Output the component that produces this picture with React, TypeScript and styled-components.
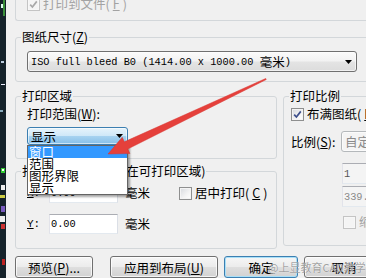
import React from "react";
import styled, { createGlobalStyle } from "styled-components";

const CJK = `"Noto Sans CJK SC", "Noto Sans", sans-serif`;
const MONO = `"Liberation Mono", "DejaVu Sans Mono", monospace`;
const LINE = "#d3d7da";

const Global = createGlobalStyle`
  html, body { margin: 0; padding: 0; background: #f0f0f0; }
  body { width: 366px; height: 278px; overflow: hidden; }
`;

const Frame = styled.div`
  position: relative;
  width: 366px;
  height: 278px;
  overflow: hidden;
  display: flex;
  background: #f0f0f0;
  font-family: ${CJK};
  font-size: 12.5px;
  color: #000;
`;

const Desktop = styled.svg`
  flex: 0 0 6px;
  width: 6px;
  height: 278px;
  display: block;
`;

const Dialog = styled.div`
  flex: 0 0 375px;
  margin-left: 9px;
  display: flex;
  flex-direction: column;
`;

const PrevGroup = styled.div`
  height: 22px;
  box-sizing: border-box;
  border-left: 1px solid ${LINE};
  border-bottom: 1px solid ${LINE};
  border-bottom-left-radius: 3px;
  padding-left: 11px;
  overflow: hidden;
`;

const Group = styled.fieldset<{ $mt?: number; $w?: number }>`
  margin: ${(p) => p.$mt ?? 0}px 0 0 0;
  padding: 0;
  border: 1px solid ${LINE};
  border-radius: 3px;
  min-width: 0;
  box-sizing: border-box;
  width: ${(p) => (p.$w ? `${p.$w}px` : "auto")};
`;

const Legend = styled.legend`
  margin-left: 5px;
  padding: 0 1px;
  height: 14px;
  line-height: 14px;
  font-size: 12.5px;
  white-space: nowrap;
`;

const Body = styled.div<{ $pad: string; $gap?: number }>`
  padding: ${(p) => p.$pad};
  display: flex;
  flex-direction: column;
  gap: ${(p) => p.$gap ?? 0}px;
`;

const Columns = styled.div`
  display: flex;
  align-items: flex-start;
  gap: 6px;
  margin-top: 7px;
`;

const Column = styled.div<{ $w: number }>`
  flex: 0 0 ${(p) => p.$w}px;
  display: flex;
  flex-direction: column;
`;

const Key = styled.span`
  text-decoration: underline;
`;

const Lat = styled.span`
  font-family: ${MONO};
  font-size: 10.3px;
  white-space: pre;
`;

const Label = styled.div<{ $w?: number; $mt?: number }>`
  height: 14px;
  line-height: 14px;
  white-space: nowrap;
  margin-top: ${(p) => p.$mt ?? 0}px;
  ${(p) => (p.$w ? `flex: 0 0 ${p.$w}px;` : "")}
`;

const MonoLabel = styled.div<{ $w: number }>`
  flex: 0 0 ${(p) => p.$w}px;
  font-family: ${MONO};
  font-size: 11px;
  line-height: 14px;
`;

const CheckRow = styled.div<{ $mt?: number; $ml?: number; $disabled?: boolean }>`
  display: flex;
  align-items: center;
  gap: 3px;
  height: 14px;
  line-height: 14px;
  white-space: nowrap;
  margin-top: ${(p) => p.$mt ?? 0}px;
  margin-left: ${(p) => p.$ml ?? 0}px;
  color: ${(p) => (p.$disabled ? "#a3a3a3" : "#000")};
`;

const Box = styled.span<{ $disabled?: boolean }>`
  flex: none;
  width: 13px;
  height: 13px;
  box-sizing: border-box;
  border: 1px solid ${(p) => (p.$disabled ? "#c4c4c4" : "#8e8f8f")};
  background: ${(p) =>
    p.$disabled
      ? "#f4f4f4"
      : "linear-gradient(135deg, #d6d9de 0%, #f4f4f4 60%, #ffffff 100%)"};
  box-shadow: inset 0 0 0 1px ${(p) => (p.$disabled ? "#f7f7f7" : "#f4f4f4")};
  display: flex;
  align-items: center;
  justify-content: center;
`;

const Row = styled.div<{ $mt?: number }>`
  display: flex;
  align-items: center;
  margin-top: ${(p) => p.$mt ?? 0}px;
`;

const Select = styled.div<{ $w: number; $h: number; $variant: "plain" | "hot" | "disabled" }>`
  position: relative;
  width: ${(p) => p.$w}px;
  height: ${(p) => p.$h}px;
  box-sizing: border-box;
  border-radius: 3px;
  display: flex;
  align-items: center;
  padding-left: 3px;
  white-space: nowrap;
  border: 1px solid
    ${(p) => (p.$variant === "hot" ? "#3c7fb1" : p.$variant === "disabled" ? "#b4b8bb" : "#707070")};
  background: ${(p) =>
    p.$variant === "hot"
      ? "linear-gradient(#e6f3fb 0%, #cfe8f8 48%, #a6d2f0 52%, #86bfe8 100%)"
      : p.$variant === "disabled"
      ? "#f4f4f4"
      : "linear-gradient(#fbfbfb 0%, #f2f2f2 48%, #e4e4e4 52%, #dcdcdc 100%)"};
  color: ${(p) => (p.$variant === "disabled" ? "#8a8a8a" : "#000")};
  box-shadow: inset 0 0 0 1px rgba(255, 255, 255, 0.6);
`;

const DropArrow = styled.svg`
  margin-left: auto;
  margin-right: 4px;
  width: 7px;
  height: 4px;
  flex: none;
`;

const SelectWrap = styled.div`
  position: relative;
  margin-top: 6px;
`;

const ListBox = styled.div`
  position: absolute;
  top: 100%;
  left: 0;
  z-index: 5;
  width: 101px;
  box-sizing: border-box;
  border: 1px solid #646464;
  background: #fff;
  box-shadow: 2px 2px 2px rgba(0, 0, 0, 0.35);
`;

const ListItem = styled.div<{ $selected?: boolean }>`
  height: 12px;
  line-height: 12px;
  padding-left: 1px;
  white-space: nowrap;
  background: ${(p) => (p.$selected ? "#3399ff" : "transparent")};
  color: ${(p) => (p.$selected ? "#fff" : "#000")};
`;

const TextBox = styled.div<{ $w: number; $h: number; $ml?: number; $mt?: number; $disabled?: boolean }>`
  width: ${(p) => p.$w}px;
  height: ${(p) => p.$h}px;
  margin-left: ${(p) => p.$ml ?? 0}px;
  margin-top: ${(p) => p.$mt ?? 0}px;
  box-sizing: border-box;
  border: 1px solid;
  border-color: #abadb3 #dbdfe6 #e3e9ef #e2e3ea;
  background: ${(p) => (p.$disabled ? "#f4f4f4" : "#fff")};
  color: ${(p) => (p.$disabled ? "#8a8a8a" : "#000")};
  font-family: ${MONO};
  font-size: 10.3px;
  padding-left: 1px;
  display: flex;
  align-items: center;
  flex: none;
`;

const Unit = styled.div<{ $ml: number }>`
  margin-left: ${(p) => p.$ml}px;
  line-height: 14px;
`;

const ButtonBar = styled.div`
  display: flex;
  gap: 6px;
  margin-top: 7px;
`;

const Button = styled.button<{ $w: number; $ml?: number; $default?: boolean }>`
  flex: 0 0 ${(p) => p.$w}px;
  height: 22px;
  margin: 0 0 0 ${(p) => p.$ml ?? 0}px;
  padding: 0;
  border: 1px solid ${(p) => (p.$default ? "#3c7fb1" : "#707070")};
  border-radius: 3px;
  background: linear-gradient(#f6f6f6 0%, #ececec 48%, #dedede 52%, #d2d2d2 100%);
  box-shadow: inset 0 0 0 1px ${(p) => (p.$default ? "#a9e0f8" : "rgba(255,255,255,0.75)")};
  font-family: ${CJK};
  font-size: 12.5px;
  color: #000;
  white-space: nowrap;
`;

const Overlay = styled.svg`
  position: absolute;
  left: 0;
  top: 0;
  width: 366px;
  height: 278px;
  z-index: 10;
  pointer-events: none;
`;

const Watermark = styled.div`
  position: absolute;
  left: 268px;
  top: 259px;
  z-index: 11;
  font-family: ${CJK};
  font-size: 11px;
  line-height: 16px;
  color: rgba(100, 100, 100, 0.6);
  text-shadow: 0 0 1px #fff;
  white-space: nowrap;
`;

const Check = ({ on, disabled }: { on?: boolean; disabled?: boolean }) => (
  <Box $disabled={disabled}>
    {on && (
      <svg width="9" height="9" viewBox="0 0 9 9">
        <path
          d="M1.2 4.6 L3.4 7 L7.8 1.4"
          fill="none"
          stroke={disabled ? "#a8a8a8" : "#3d4f8c"}
          strokeWidth="1.7"
        />
      </svg>
    )}
  </Box>
);

const Arrow = () => (
  <DropArrow viewBox="0 0 7 4">
    <path d="M0 0 H7 L3.5 4 Z" fill="#000" />
  </DropArrow>
);

export default function App() {
  return (
    <>
      <Global />
      <Frame>
        <Desktop viewBox="0 0 6 278">
          <rect width="6" height="278" fill="#15222a" />
          <rect x="3" y="0" width="2" height="16" fill="#3a8f3a" />
          <rect x="1" y="4" width="2" height="4" fill="#dfe" />
          <rect x="1" y="61" width="3" height="2" fill="#bcd" />
          <rect x="1" y="84" width="4" height="1" fill="#eef" />
          <rect x="0" y="110" width="3" height="2" fill="#8ab" />
          <rect x="1" y="168" width="4" height="5" fill="#3c3" />
          <rect x="2" y="169" width="2" height="2" fill="#fff" />
          <rect x="1" y="185" width="4" height="5" fill="#eee" />
          <rect x="0" y="195" width="5" height="3" fill="#cc4" />
          <rect x="1" y="206" width="4" height="6" fill="#7a5cc0" />
          <rect x="0" y="216" width="5" height="6" fill="#eee" />
          <rect x="1" y="224" width="4" height="5" fill="#c33" />
          <rect x="2" y="259" width="3" height="6" fill="#b22" />
        </Desktop>

        <Dialog>
          <PrevGroup>
            <CheckRow $mt={-3} $disabled>
              <Check on disabled />
              打印到文件(<Key>F</Key>)
            </CheckRow>
          </PrevGroup>

          <Group $mt={9}>
            <Legend>
              图纸尺寸(<Key>Z</Key>)
            </Legend>
            <Body $pad="7px 0 9px 11px">
              <Select $w={330} $h={21} $variant="plain">
                <Lat>{"ISO full bleed B0 (1414.00 x 1000.00 "}</Lat>毫米<Lat>)</Lat>
                <Arrow />
              </Select>
            </Body>
          </Group>

          <Columns>
            <Column $w={262}>
              <Group>
                <Legend>打印区域</Legend>
                <Body $pad="4px 0 13px 11px">
                  <Label>
                    打印范围(<Key>W</Key>):
                  </Label>
                  <SelectWrap>
                    <Select $w={101} $h={18} $variant="hot">
                      显示
                      <Arrow />
                    </Select>
                    <ListBox>
                      <ListItem $selected>窗口</ListItem>
                      <ListItem>范围</ListItem>
                      <ListItem>图形界限</ListItem>
                      <ListItem>显示</ListItem>
                    </ListBox>
                  </SelectWrap>
                </Body>
              </Group>

              <Group $mt={5}>
                <Legend>打印偏移(原点设置在可打印区域)</Legend>
                <Body $pad="5px 0 14px 11px" $gap={11}>
                  <Row>
                    <MonoLabel $w={22}>
                      <Key>X</Key>:
                    </MonoLabel>
                    <TextBox $w={69} $h={20}>0.00</TextBox>
                    <Unit $ml={7}>毫米</Unit>
                    <CheckRow $ml={29}>
                      <Check />
                      居中打印(<Key>C</Key>)
                    </CheckRow>
                  </Row>
                  <Row>
                    <MonoLabel $w={22}>
                      <Key>Y</Key>:
                    </MonoLabel>
                    <TextBox $w={69} $h={20}>0.00</TextBox>
                    <Unit $ml={7}>毫米</Unit>
                  </Row>
                </Body>
              </Group>
            </Column>

            <Column $w={107}>
              <Group>
                <Legend>打印比例</Legend>
                <Body $pad="4px 0 16px 7px">
                  <CheckRow>
                    <Check on />
                    布满图纸(<Key>I</Key>)
                  </CheckRow>
                  <Row $mt={10}>
                    <Label $w={50}>
                      比例(<Key>S</Key>):
                    </Label>
                    <Select $w={50} $h={21} $variant="disabled">
                      自定义
                    </Select>
                  </Row>
                  <TextBox $w={50} $h={21} $ml={51} $mt={11} $disabled>
                    <span style={{ color: "#555" }}>1</span>
                  </TextBox>
                  <TextBox $w={50} $h={21} $ml={51} $mt={2} $disabled>
                    339.6
                  </TextBox>
                  <CheckRow $mt={8} $ml={52} $disabled>
                    <Check disabled />
                    缩放线宽
                  </CheckRow>
                </Body>
              </Group>
            </Column>
          </Columns>

          <ButtonBar>
            <Button $w={78}>
              预览(<Key>P</Key>)...
            </Button>
            <Button $w={108} $ml={11}>
              应用到布局(<Key>U</Key>)
            </Button>
            <Button $w={74} $default>
              确定
            </Button>
            <Button $w={80}>取消</Button>
          </ButtonBar>
        </Dialog>

        <Overlay viewBox="0 0 366 278">
          <polygon
            points="265.74,78.46 124.35,141.81 122.21,137.29 108,154 129.93,153.55 127.78,149.03 266.26,79.54"
            fill="#e5403b"
            stroke="#d83431"
            strokeWidth="0.5"
            strokeLinejoin="round"
          />
        </Overlay>
        <Watermark>@上显教育CAD教学</Watermark>
      </Frame>
    </>
  );
}
